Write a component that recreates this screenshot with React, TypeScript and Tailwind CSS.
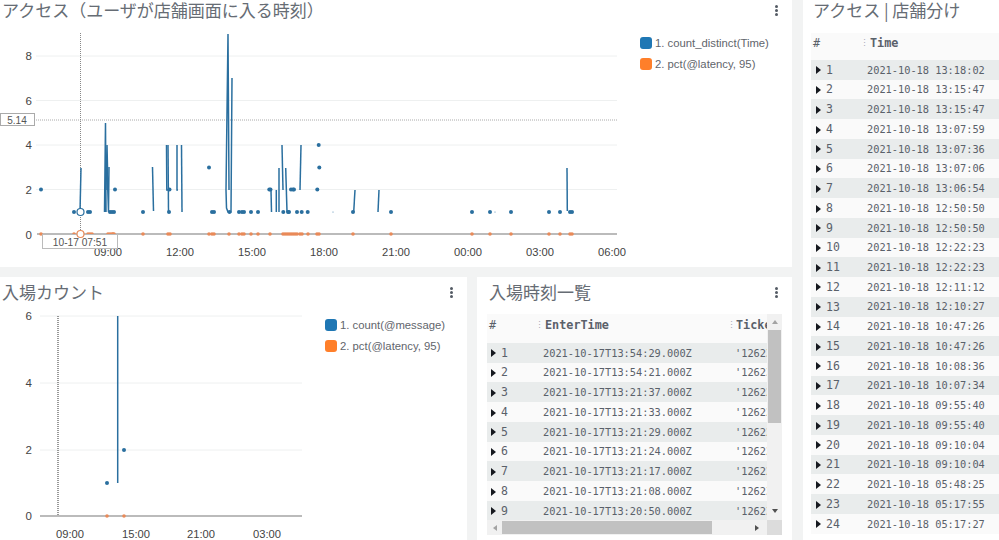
import React from 'react';

const BLUE = '#2a6f9f';
const ORANGE = '#e98a58';

const storeTimes = [
  '13:18:02', '13:15:47', '13:15:47', '13:07:59', '13:07:36', '13:07:06', '13:06:54', '12:50:50',
  '12:50:50', '12:22:23', '12:22:23', '12:11:12', '12:10:27', '10:47:26', '10:47:26', '10:08:36',
  '10:07:34', '09:55:40', '09:55:40', '09:10:04', '09:10:04', '05:48:25', '05:17:55', '05:17:27',
];

const enterRows = [
  ['13:54:29', '3'], ['13:54:21', '3'], ['13:21:37', '2'], ['13:21:33', '2'], ['13:21:29', '2'],
  ['13:21:24', '2'], ['13:21:17', '2'], ['13:21:08', '3'], ['13:20:50', '3'],
];

// accessチャートの折れ線 (ページ座標)
const accessLines = [
  '80,212 81,168',
  '104.5,212 105.5,123 106,212',
  '106,190 107,145 108,190',
  '107,167 108.5,212 109,167',
  '152.5,167 153.5,211',
  '166.5,145 166.8,190 168,190',
  '168,145 168.5,212',
  '177,145 177,190 178,190',
  '181.5,145 182,212',
  '226,190 228,34 229,190',
  '226,190 226.5,208 228,212 231,212 232,78',
  '271,190 271.5,212',
  '276.3,190 276.3,212',
  '279,168 279,212',
  '282,145 283,190',
  '285.7,168 287,212',
  '301,145 300,190',
  '355,190 353.7,212',
  '379,190 378,212',
  '567,168 567.3,211',
];

const access1 = [74, 88, 90, 110, 112, 114, 143, 169, 212, 214, 229.5, 239, 242, 244, 251, 258, 283.3, 288, 289, 297, 301.7, 307.7, 353, 391, 472, 490, 511, 549, 560, 570, 572];
const access2 = [41, 115, 169.5, 269.3, 270.5, 291, 293, 294, 317.3];
const accessZero = [41, 74, 88, 90, 92, 108, 110, 112, 113, 114, 143, 168, 170, 209, 212, 214, 229, 239, 242, 244, 251, 258, 270, 283, 285, 287, 289, 291, 293, 295, 297, 300, 302, 308, 317, 319, 353, 391, 472, 490, 511, 549, 560, 570, 572];

const Kebab: React.FC = () => (
  <div className="flex flex-col gap-[1px] w-[3px] shrink-0">
    <span className="w-[3px] h-[3px] rounded-full bg-[#545b64]"></span>
    <span className="w-[3px] h-[3px] rounded-full bg-[#545b64]"></span>
    <span className="w-[3px] h-[3px] rounded-full bg-[#545b64]"></span>
  </div>
);

const PanelTitle: React.FC<{ title: string; left: string }> = ({ title, left }) => (
  <div className={`flex items-center justify-between h-[20px] pr-[14.5px] ${left}`}>
    <h2 className="font-['Noto_Sans_CJK_JP',sans-serif] font-normal text-[17px] leading-[20px] text-[#666c74] whitespace-nowrap">{title}</h2>
    <Kebab />
  </div>
);

const Legend: React.FC<{ first: string; className: string }> = ({ first, className }) => (
  <div className={`flex flex-col gap-[9px] text-[11.3px] leading-[12px] text-[#5f656c] ${className}`}>
    <div className="flex items-center gap-[3px] whitespace-nowrap">
      <span className="w-[12px] h-[12px] rounded-[3px] bg-[#1f77b4]"></span>
      {first}
    </div>
    <div className="flex items-center gap-[3px] whitespace-nowrap">
      <span className="w-[12px] h-[12px] rounded-[3px] bg-[#ff7f2a]"></span>
      2. pct(@latency, 95)
    </div>
  </div>
);

const AccessChart: React.FC = () => {
  const grid = [{ v: '8', y: 56 }, { v: '6', y: 100.5 }, { v: '4', y: 145 }, { v: '2', y: 189.5 }];
  const ticks = [['09:00', 108], ['12:00', 180], ['15:00', 252], ['18:00', 324], ['21:00', 396], ['00:00', 468], ['03:00', 540], ['06:00', 612]] as const;
  return (
    <svg viewBox="0 24 632 243" className="w-[632px] h-[243px] shrink-0">
      {grid.map((g) => (
        <g key={g.v}>
          <line x1="36" x2="617" y1={g.y} y2={g.y} stroke="#eef0f0" />
          <text x="32" y={g.y + 4} textAnchor="end" fontSize="11.5" fill="#444">{g.v}</text>
        </g>
      ))}
      <text x="32" y="239" textAnchor="end" fontSize="11.5" fill="#444">0</text>
      <line x1="36" x2="617" y1="120" y2="120" stroke="#aaa" strokeDasharray="1 1" />
      <line x1="80.5" x2="80.5" y1="33" y2="234" stroke="#888" strokeDasharray="1 1" />
      <line x1="37" x2="617" y1="234" y2="234" stroke="#bbb" strokeWidth="2" />
      {accessLines.map((p) => (
        <polyline key={p} points={p} fill="none" stroke={BLUE} strokeWidth="1.5" />
      ))}
      {access1.map((x, i) => <circle key={i} cx={x} cy="212" r="2" fill={BLUE} />)}
      {access2.map((x, i) => <circle key={i} cx={x} cy="189.5" r="2" fill={BLUE} />)}
      <circle cx="209" cy="167.5" r="2" fill={BLUE} />
      <circle cx="318.7" cy="145" r="2" fill={BLUE} />
      <circle cx="319.3" cy="167.5" r="2" fill={BLUE} />
      <circle cx="333" cy="212" r="0.5" fill={BLUE} />
      <circle cx="495" cy="212" r="0.5" fill={BLUE} />
      {accessZero.map((x, i) => <circle key={i} cx={x} cy="234" r="1.8" fill={ORANGE} />)}
      {ticks.map(([t, x]) => (
        <text key={t} x={x} y="256" textAnchor="middle" fontSize="11.2" fill="#444">{t}</text>
      ))}
      <rect x="0.5" y="113.5" width="34" height="12" fill="#fff" stroke="#aaa" />
      <text x="17" y="123.5" textAnchor="middle" fontSize="10" fill="#555">5.14</text>
      <rect x="42.5" y="234.5" width="75" height="14" fill="#fff" stroke="#bbb" />
      <text x="80" y="246" textAnchor="middle" fontSize="10.2" fill="#555">10-17 07:51</text>
      <circle cx="80.5" cy="212" r="3.5" fill="#fff" stroke={BLUE} strokeWidth="1.2" />
      <circle cx="80.5" cy="234" r="3.5" fill="#fff" stroke={ORANGE} strokeWidth="1.2" />
    </svg>
  );
};

const CountChart: React.FC = () => {
  const grid = [{ v: '6', y: 316 }, { v: '4', y: 383 }, { v: '2', y: 450 }];
  const ticks = [['09:00', 70], ['15:00', 136], ['21:00', 201], ['03:00', 267]] as const;
  return (
    <svg viewBox="0 303 320 237" className="w-[320px] h-[237px] shrink-0">
      {grid.map((g) => (
        <g key={g.v}>
          <line x1="40" x2="302" y1={g.y} y2={g.y} stroke="#eef0f0" />
          <text x="32" y={g.y + 4} textAnchor="end" fontSize="11.5" fill="#444">{g.v}</text>
        </g>
      ))}
      <text x="32" y="520" textAnchor="end" fontSize="11.5" fill="#444">0</text>
      <line x1="58" x2="58" y1="316" y2="516" stroke="#555" strokeWidth="1.2" strokeDasharray="1 1" />
      <line x1="40" x2="302" y1="516" y2="516" stroke="#bbb" strokeWidth="2" />
      <line x1="117.7" x2="117.7" y1="316" y2="483" stroke={BLUE} strokeWidth="1.5" />
      <circle cx="107" cy="483" r="2" fill={BLUE} />
      <circle cx="124" cy="450" r="2" fill={BLUE} />
      <circle cx="107" cy="516" r="1.8" fill={ORANGE} />
      <circle cx="124" cy="516" r="1.8" fill={ORANGE} />
      {ticks.map(([t, x]) => (
        <text key={t} x={x} y="538" textAnchor="middle" fontSize="11.2" fill="#444">{t}</text>
      ))}
    </svg>
  );
};

const Caret: React.FC = () => (
  <span className="w-0 h-0 border-y-[4px] border-y-transparent border-l-[5px] border-l-[#16191f]"></span>
);

const mono = "font-['DejaVu_Sans_Mono',monospace] text-[#5a616a]";

const EnterTable: React.FC = () => (
  <div className="flex flex-col mx-[10px] mt-[12px]">
    <div className="flex h-[206px]">
      <div className={`w-[280px] overflow-hidden ${mono}`}>
        <div className="flex items-center h-[29px] pb-[5px] bg-[#fafafa] text-[11.8px] font-semibold">
          <span className="w-[48px] pl-[2px] shrink-0 font-normal">#</span>
          <span className="w-[10px] shrink-0 text-[9px] font-normal text-[#aab]">⋮</span>
          <span className="w-[182px] shrink-0">EnterTime</span>
          <span className="w-[9px] shrink-0 text-[9px] font-normal text-[#aab]">⋮</span>
          <span className="whitespace-nowrap">Ticket</span>
        </div>
        {enterRows.map(([t, id], i) => (
          <div key={t} className={`flex items-center h-[19.74px] pt-[1px] ${i % 2 === 0 ? 'bg-[#e9ecec]' : 'bg-[#fafafa]'}`}>
            <span className="flex items-center gap-[5px] w-[56px] pl-[4px] shrink-0 text-[11.5px]"><Caret />{i + 1}</span>
            <span className="w-[192px] shrink-0 text-[10.3px]">2021-10-17T{t}.000Z</span>
            <span className="text-[10.3px] whitespace-nowrap">'1262{id}</span>
          </div>
        ))}
      </div>
      <div className="flex flex-col items-center w-[15px] bg-[#f1f1f1]">
        <span className="flex items-center justify-center h-[16px] w-full">
          <span className="w-0 h-0 border-x-[3.5px] border-x-transparent border-b-[4px] border-b-[#a3a3a3]"></span>
        </span>
        <span className="w-[13px] h-[93px] bg-[#c1c1c1]"></span>
        <span className="flex-1"></span>
        <span className="flex items-center justify-center h-[18px] w-full">
          <span className="w-0 h-0 border-x-[3.5px] border-x-transparent border-t-[4px] border-t-[#505050]"></span>
        </span>
      </div>
    </div>
    <div className="flex items-center h-[15px] bg-[#f1f1f1]">
      <span className="flex items-center justify-center w-[15px] h-full">
        <span className="w-0 h-0 border-y-[3.5px] border-y-transparent border-r-[4px] border-r-[#a3a3a3]"></span>
      </span>
      <span className="w-[210px] h-[13px] bg-[#c1c1c1]"></span>
      <span className="flex-1"></span>
      <span className="flex items-center justify-center w-[20px] h-full">
        <span className="w-0 h-0 border-y-[3.5px] border-y-transparent border-l-[4px] border-l-[#505050]"></span>
      </span>
      <span className="w-[15px] h-full bg-[#dcdcdc]"></span>
    </div>
  </div>
);

const StoreTable: React.FC = () => (
  <div className={`ml-[8px] mt-[13px] ${mono}`}>
    <div className="flex items-center h-[27px] pb-[5px] bg-[#fafafa] text-[11.8px] font-semibold">
      <span className="w-[49px] pl-[2px] font-normal">#</span>
      <span className="w-[10px] text-[9px] font-normal text-[#aab]">⋮</span>
      <span>Time</span>
    </div>
    {storeTimes.map((t, i) => (
      <div key={i} className={`flex items-center h-[19.74px] pt-[1px] ${i % 2 === 0 ? 'bg-[#e9ecec]' : 'bg-[#fafafa]'}`}>
        <span className="flex items-center gap-[5px] w-[56px] pl-[5px] text-[11.5px]"><Caret />{i + 1}</span>
        <span className="text-[10.3px]">2021-10-18 {t}</span>
      </div>
    ))}
  </div>
);

export default function App() {
  return (
    <div className="flex gap-[11px] w-[999px] h-[540px] overflow-hidden bg-[#f2f3f3] font-['Liberation_Sans',sans-serif]">
      <div className="flex flex-col gap-[10px] w-[792px] shrink-0">
        <section className="h-[267px] bg-white">
          <PanelTitle title="アクセス（ユーザが店舗画面に入る時刻）" left="pl-[2px]" />
          <div className="flex pt-[4px]">
            <AccessChart />
            <Legend first="1. count_distinct(Time)" className="pl-[8px] pt-[13px]" />
          </div>
        </section>
        <div className="flex gap-[10px] flex-1 min-h-0">
          <section className="w-[467px] bg-white pt-[5px]">
            <PanelTitle title="入場カウント" left="pl-[2px]" />
            <div className="flex mt-[1px]">
              <CountChart />
              <Legend first="1. count(@message)" className="pl-[5px] pt-[16px]" />
            </div>
          </section>
          <section className="w-[315px] bg-white pt-[5px]">
            <PanelTitle title="入場時刻一覧" left="pl-[12px]" />
            <EnterTable />
          </section>
        </div>
      </div>
      <section className="flex-1 bg-white overflow-hidden">
        <div className="pl-[10px] h-[20px]">
          <h2 className="font-['Noto_Sans_CJK_JP',sans-serif] font-normal text-[17px] leading-[20px] text-[#666c74] whitespace-nowrap">アクセス | 店舗分け</h2>
        </div>
        <StoreTable />
      </section>
    </div>
  );
}
